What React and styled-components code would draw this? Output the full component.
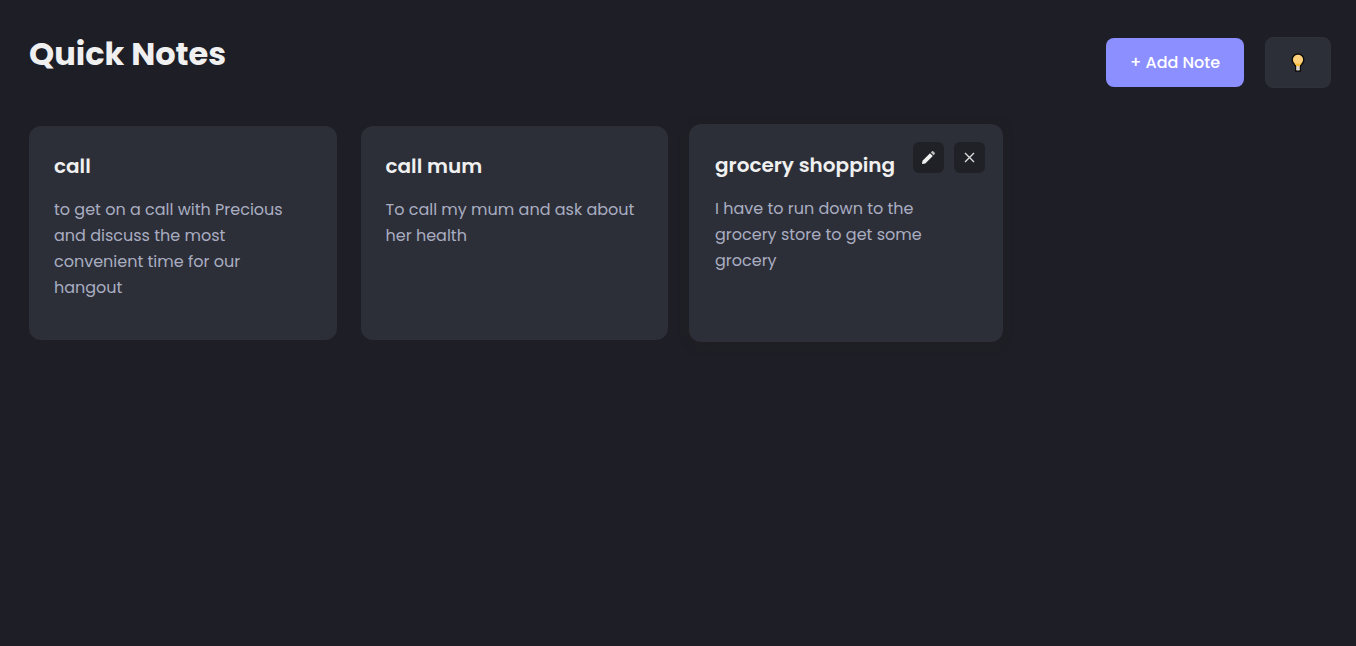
import React from 'react';
import styled, { createGlobalStyle, css } from 'styled-components';

const GlobalStyle = createGlobalStyle`
  *, *::before, *::after { box-sizing: border-box; }
  body {
    margin: 0;
    min-height: 100vh;
    background: #1e1e26;
    color: #f0f0f0;
    font-family: Poppins, Inter, sans-serif;
    font-size: 16px;
  }
  button { font: inherit; cursor: pointer; }
`;

const Page = styled.div`
  padding: 29px 25px 29px 29px;
`;

const Header = styled.header`
  display: flex;
  align-items: flex-start;
  justify-content: space-between;
  margin-bottom: 38px;
`;

const PageTitle = styled.h1`
  margin: 0;
  font-size: 32px;
  line-height: 50px;
  font-weight: 700;
`;

const HeaderActions = styled.div`
  display: flex;
  align-items: center;
  gap: 21px;
  padding-top: 8px;
`;

const AddButton = styled.button`
  width: 138px;
  height: 49px;
  padding: 0;
  border: 0;
  border-radius: 8px;
  background: #8c8fff;
  color: #fff;
  font-weight: 500;
`;

const ThemeButton = styled.button`
  display: flex;
  align-items: center;
  justify-content: center;
  width: 66px;
  height: 51px;
  padding: 0;
  border: 1px solid #2f3139;
  border-radius: 8px;
  background: #2d2f38;
`;

const NotesGrid = styled.main`
  display: grid;
  grid-template-columns: repeat(auto-fill, minmax(280px, 1fr));
  gap: 24px;
`;

const Card = styled.article`
  position: relative;
  min-height: 214px;
  padding: 25px;
  border-radius: 12px;
  background: #2d2f38;
  ${(p) => p.$raised && css`
    margin: -2px -3px;
    padding: 26px;
    box-shadow: 0 2px 10px rgba(32, 32, 32, 0.6);
  `}
`;

const NoteTitle = styled.h2`
  margin: 0 0 16px;
  font-size: 20px;
  line-height: 30px;
  font-weight: 600;
`;

const NoteText = styled.p`
  margin: 0;
  color: #a9adc1;
  line-height: 26px;
`;

const CardActions = styled.div`
  position: absolute;
  top: 18px;
  right: 18px;
  display: flex;
  gap: 10px;
`;

const IconButton = styled.button`
  display: flex;
  align-items: center;
  justify-content: center;
  width: 31px;
  height: 31px;
  padding: 0;
  border: 0;
  border-radius: 6px;
  background: #202126;
  color: #f0f0f0;
`;

const BulbIcon = () => (
  <svg width="14" height="20" viewBox="0 0 14 20" aria-hidden="true">
    <path d="M7 1C3.700 1 1.200 3.500 1.200 6.700c0 2.300 1.200 3.800 2.500 4.900.7.600 1 1.100 1 1.900V18h4.600v-4.500c0-.8.3-1.300 1-1.900 1.300-1.100 2.500-2.600 2.500-4.900C12.800 3.500 10.300 1 7 1Z" fill="#ffd07a" stroke="#0b0b0c" strokeWidth="1.400" />
    <path d="M3.200 10.400h7.600c-.9 1.100-2 1.500-2.200 2.900H5.400c-.2-1.400-1.300-1.800-2.200-2.900Z" fill="#fdbd34" />
    <path d="M5.400 13.300h3.200v4H5.400Z" fill="#d3d3d6" />
  </svg>
);

const PencilIcon = () => (
  <svg width="15" height="15" viewBox="0 0 15 15" fill="currentColor" aria-hidden="true">
    <path d="M1 14 1.500 10.700 9 3.200l2.800 2.800-7.500 7.500Z" />
    <path d="m9.800 2.400 1-1c.5-.5 1.100-.5 1.600 0l1.200 1.200c.5.5.5 1.100 0 1.600l-1 1Z" opacity="0.75" />
  </svg>
);

const CloseIcon = () => (
  <svg width="11" height="11" viewBox="0 0 11 11" fill="none" stroke="currentColor" strokeWidth="1.400" opacity="0.9" aria-hidden="true">
    <path d="m1 1 9 9M10 1l-9 9" />
  </svg>
);

const notes = [
  { title: 'call', text: 'to get on a call with Precious and discuss the most convenient time for our hangout' },
  { title: 'call mum', text: 'To call my mum and ask about her health' },
  { title: 'grocery shopping', text: 'I have to run down to the grocery store to get some grocery', active: true },
];

export default function App() {
  return (
    <>
      <GlobalStyle />
      <Page>
        <Header>
          <PageTitle>Quick Notes</PageTitle>
          <HeaderActions>
            <AddButton type="button">+ Add Note</AddButton>
            <ThemeButton type="button" aria-label="Toggle theme"><BulbIcon /></ThemeButton>
          </HeaderActions>
        </Header>
        <NotesGrid>
          {notes.map((note) => (
            <Card key={note.title} $raised={note.active}>
              <NoteTitle>{note.title}</NoteTitle>
              <NoteText>{note.text}</NoteText>
              {note.active && (
                <CardActions>
                  <IconButton type="button" aria-label="Edit note"><PencilIcon /></IconButton>
                  <IconButton type="button" aria-label="Delete note"><CloseIcon /></IconButton>
                </CardActions>
              )}
            </Card>
          ))}
        </NotesGrid>
      </Page>
    </>
  );
}
